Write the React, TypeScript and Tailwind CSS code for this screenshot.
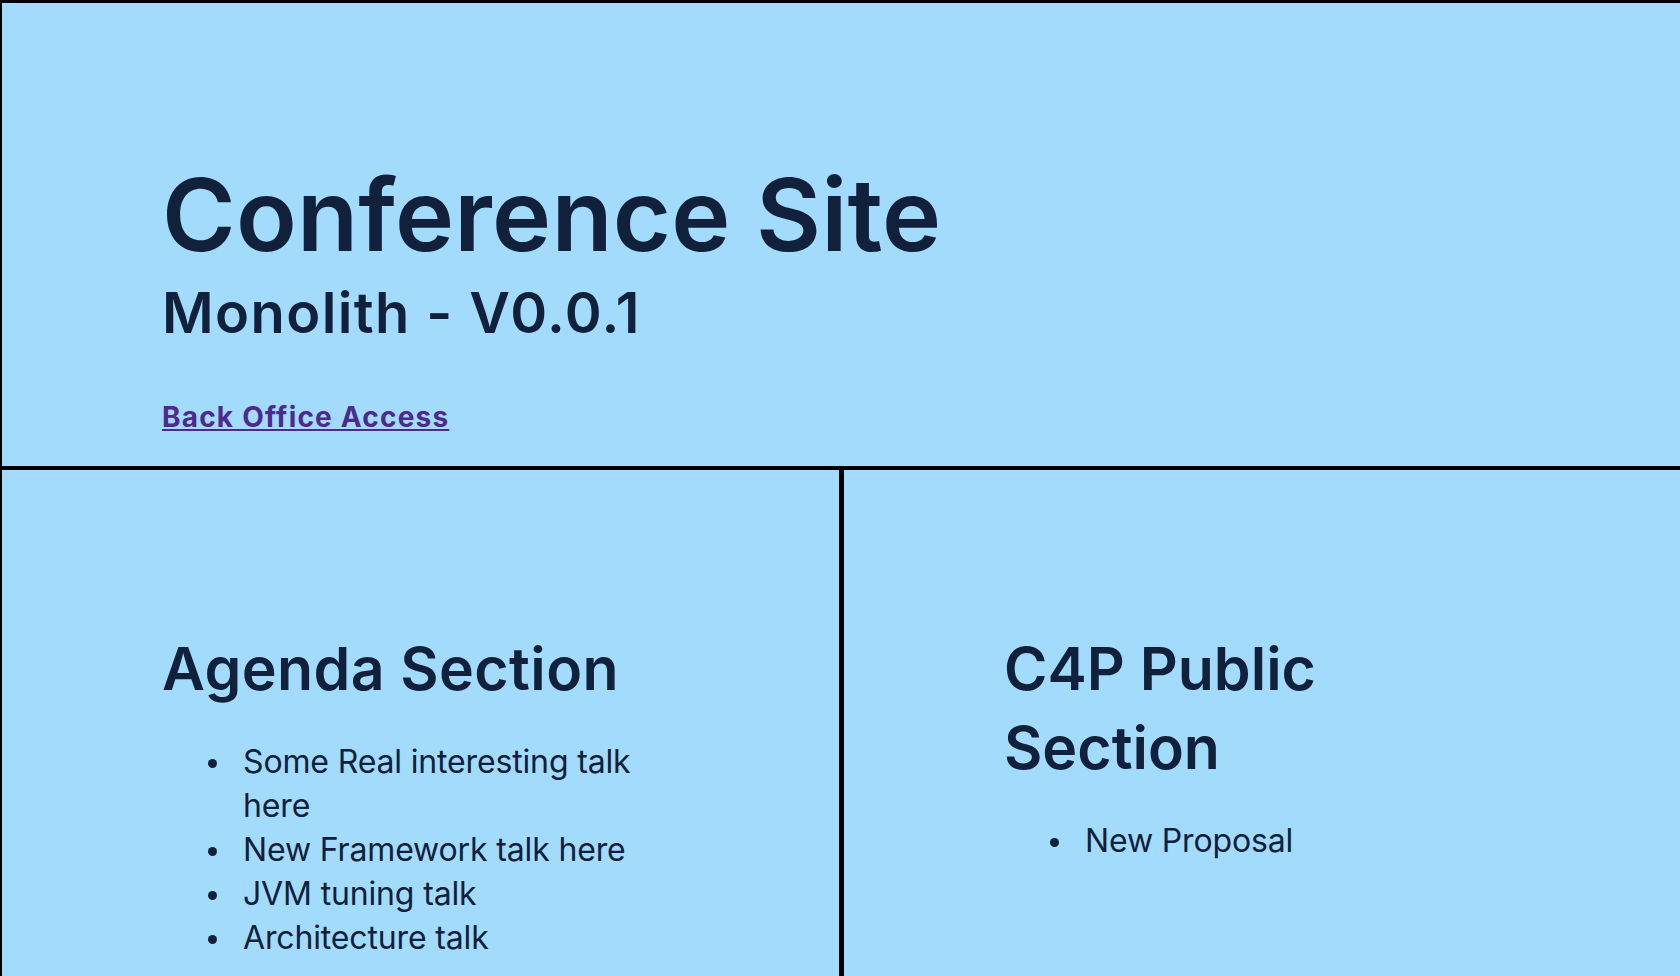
import React from "react";

const agenda = [
  "Some Real interesting talk here",
  "New Framework talk here",
  "JVM tuning talk",
  "Architecture talk",
];

const proposals = ["New Proposal"];

const Bullets = ({ items }: { items: string[] }) => (
  <ul className="mt-[32px] text-[32px] leading-[44px] font-normal tracking-[-0.15px]">
    {items.map((item) => (
      <li key={item} className="flex">
        <span className="w-[81px] shrink-0">
          <span className="block w-[9px] h-[9px] ml-[46px] mt-[19px] rounded-full bg-[#11203b]" />
        </span>
        <span>{item}</span>
      </li>
    ))}
  </ul>
);

export default function App() {
  return (
    <div
      className="min-h-screen bg-[#a2dbfb] text-[#11203b] border-t-[3px] border-l-2 border-black flex flex-col overflow-hidden"
      style={{ fontFamily: "Inter, 'Noto Sans', sans-serif" }}
    >
      <header className="border-b-4 border-black pl-[160px] pt-[162px] pb-[33px]">
        <h1 className="text-[100px] leading-none font-semibold tracking-[0.2px]">Conference Site</h1>
        <h2 className="mt-[20px] text-[56px] leading-none font-semibold tracking-[1.4px]">Monolith - V0.0.1</h2>
        <a href="#" className="inline-block mt-[62px] text-[28px] leading-none font-bold tracking-[1.2px] text-[#4f2a8e] underline">
          Back Office Access
        </a>
      </header>

      <main className="flex-1 grid grid-cols-[842px_1fr]">
        <section className="border-r-[5px] border-black px-[160px] pt-[159px] pb-40">
          <h2 className="text-[59px] leading-[79px] font-semibold tracking-[0.4px]">Agenda Section</h2>
          <Bullets items={agenda} />
        </section>
        <section className="px-[160px] pt-[159px] pb-40">
          <h2 className="text-[59px] leading-[79px] font-semibold">C4P Public Section</h2>
          <Bullets items={proposals} />
        </section>
      </main>
    </div>
  );
}
